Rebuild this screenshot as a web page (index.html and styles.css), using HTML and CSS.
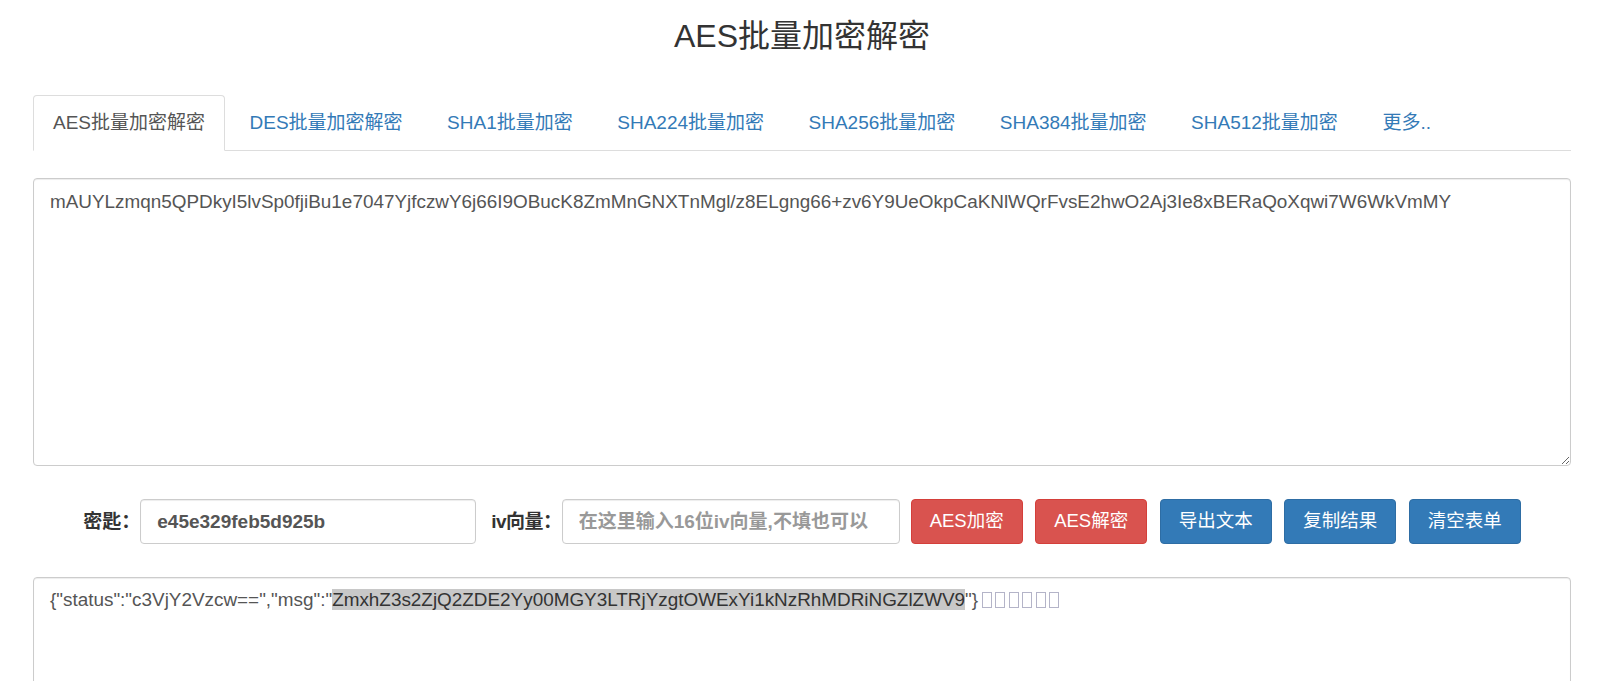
FILE: index.html
```html
<!DOCTYPE html>
<html lang="zh-CN">
  <head>
    <meta charset="UTF-8" />
    <meta name="viewport" content="width=device-width, initial-scale=1.0" />
    <title>AES批量加密解密</title>
    <link rel="stylesheet" href="styles.css">
  </head>
  <body>
    <div class="container">
      <h1 class="title">AES批量加密解密</h1>

      <ul class="nav-tabs">
        <li class="active"><a href="#">AES批量加密解密</a></li>
        <li><a href="#">DES批量加密解密</a></li>
        <li><a href="#">SHA1批量加密</a></li>
        <li><a href="#">SHA224批量加密</a></li>
        <li><a href="#">SHA256批量加密</a></li>
        <li><a href="#">SHA384批量加密</a></li>
        <li><a href="#">SHA512批量加密</a></li>
        <li><a href="#">更多..</a></li>
      </ul>

      <textarea class="source" spellcheck="false">mAUYLzmqn5QPDkyI5lvSp0fjiBu1e7047YjfczwY6j66I9OBucK8ZmMnGNXTnMgl/z8ELgng66+zv6Y9UeOkpCaKNlWQrFvsE2hwO2Aj3Ie8xBERaQoXqwi7W6WkVmMY</textarea>

      <div class="controls">
        <label class="label" for="key">密匙：</label>
        <input id="key" class="input key-input" type="text" value="e45e329feb5d925b" />
        <label class="label label-iv" for="iv">iv向量：</label>
        <input id="iv" class="input iv-input" type="text" placeholder="在这里输入16位iv向量,不填也可以" />
        <button class="btn btn-danger">AES加密</button>
        <button class="btn btn-danger">AES解密</button>
        <button class="btn btn-primary">导出文本</button>
        <button class="btn btn-primary">复制结果</button>
        <button class="btn btn-primary">清空表单</button>
      </div>

      <div class="result">{"status":"c3VjY2Vzcw==","msg":"<span class="selected">ZmxhZ3s2ZjQ2ZDE2Yy00MGY3LTRjYzgtOWExYi1kNzRhMDRiNGZlZWV9</span>"}<span class="tofu"></span><span class="tofu"></span><span class="tofu"></span><span class="tofu"></span><span class="tofu"></span><span class="tofu"></span></div>
    </div>
  </body>
</html>
```

FILE: styles.css
```css
* {
  margin: 0;
  padding: 0;
  box-sizing: border-box;
}

body {
  font-family: "Liberation Sans", "Noto Sans CJK SC", sans-serif;
  font-size: 19px;
  line-height: 1.42857;
  color: #333;
  background: #fff;
  overflow: hidden;
}

.container {
  width: 1538px;
  margin-left: 33px;
  padding-top: 19px;
}

.title {
  text-align: center;
  font-size: 32px;
  font-weight: 400;
  line-height: 1.1;
  color: #333;
  margin-bottom: 41px;
}

.nav-tabs {
  list-style: none;
  display: flex;
  border-bottom: 1px solid #ddd;
}

.nav-tabs li {
  margin-bottom: -1px;
  margin-right: 4.5px;
}

.nav-tabs a {
  display: block;
  padding: 14px 19px;
  font-size: 19px;
  line-height: 26px;
  color: #337ab7;
  text-decoration: none;
  border: 1px solid transparent;
  border-radius: 4px 4px 0 0;
}

.nav-tabs li.active a {
  color: #555;
  background: #fff;
  border-color: #ddd;
  border-bottom-color: transparent;
}

.source {
  display: block;
  width: 100%;
  height: 288px;
  margin-top: 27px;
  padding: 9px 16px;
  font-family: "Liberation Sans", "Noto Sans CJK SC", sans-serif;
  font-size: 18.9px;
  line-height: 1.42857;
  color: #555;
  border: 1px solid #ccc;
  border-radius: 4px;
  box-shadow: inset 0 1px 1px rgba(0, 0, 0, 0.075);
  resize: vertical;
  outline: none;
}

.controls {
  display: flex;
  align-items: center;
  justify-content: center;
  margin-top: 33px;
}

.label {
  font-size: 19px;
  font-weight: 700;
  color: #333;
}

.label-iv {
  margin-left: 15px;
  letter-spacing: -0.5px;
}

.input {
  height: 45px;
  padding: 10px 16px;
  font-family: "Liberation Sans", "Noto Sans CJK SC", sans-serif;
  font-size: 19px;
  font-weight: 700;
  color: #555;
  border: 1px solid #ccc;
  border-radius: 4px;
  box-shadow: inset 0 1px 1px rgba(0, 0, 0, 0.075);
  outline: none;
}

.input::placeholder {
  color: #999;
}

.key-input {
  width: 336px;
}

.iv-input {
  width: 338px;
}

.btn {
  height: 45px;
  margin-left: 12.5px;
  padding: 8px 18px;
  font-family: "Liberation Sans", "Noto Sans CJK SC", sans-serif;
  font-size: 18.5px;
  line-height: 1.42857;
  color: #fff;
  border: 1px solid transparent;
  border-radius: 4px;
  cursor: pointer;
}

.iv-input + .btn {
  margin-left: 11px;
}

.btn-danger {
  background: #d9534f;
  border-color: #d43f3a;
}

.btn-primary {
  background: #337ab7;
  border-color: #2e6da4;
}

.result {
  height: 288px;
  margin-top: 33px;
  padding: 8px 16px;
  font-size: 18.9px;
  line-height: 1.42857;
  color: #555;
  border: 1px solid #ccc;
  border-radius: 4px;
  box-shadow: inset 0 1px 1px rgba(0, 0, 0, 0.075);
}

.selected {
  background: #c8c8c8;
  color: #333;
}

.tofu {
  display: inline-block;
  width: 10px;
  height: 16px;
  margin-left: 3.5px;
  vertical-align: -2px;
  border: 1px solid #b4b4c8;
}
```
